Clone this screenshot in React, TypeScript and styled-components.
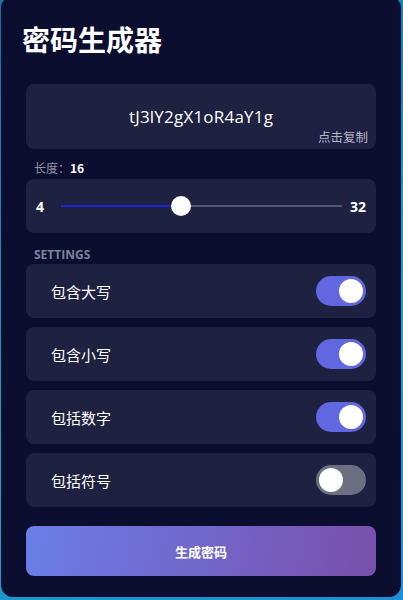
import React, { useState } from "react";
import styled, { createGlobalStyle } from "styled-components";

const GlobalStyle = createGlobalStyle`
  html, body {
    margin: 0;
    padding: 0;
  }
  body {
    width: 403px;
    height: 600px;
    overflow: hidden;
    background: linear-gradient(160deg, #1f6fa0 0%, #1aa0c8 60%, #1f8fd6 100%);
    font-family: "Noto Sans CJK SC", "Noto Sans", sans-serif;
  }
`;

const Card = styled.div`
  box-sizing: border-box;
  margin: -4px 2px 0 1px;
  height: 601px;
  padding: 24px 21px 0;
  background: #0b0e2f;
  border-radius: 12px;
  display: flex;
  flex-direction: column;
`;

const Title = styled.h1`
  margin: 0;
  font-size: 28px;
  line-height: 38px;
  font-weight: 700;
  color: #ffffff;
`;

const Content = styled.div`
  display: flex;
  flex-direction: column;
  padding: 26px 4px 0;
`;

const Panel = styled.div`
  background: #1f2141;
  border-radius: 8px;
`;

const PasswordBox = styled(Panel)`
  position: relative;
  height: 65px;
  display: flex;
  align-items: center;
  justify-content: center;
  cursor: pointer;
`;

const PasswordText = styled.span`
  font-family: "Open Sans", "Noto Sans", sans-serif;
  font-size: 17px;
  color: #ffffff;
  letter-spacing: 0.2px;
`;

const CopyHint = styled.span`
  position: absolute;
  right: 8px;
  bottom: 3px;
  font-size: 12.5px;
  color: #b5b7c8;
`;

const FieldLabel = styled.div`
  margin: 11px 0 3px 8px;
  font-size: 12px;
  line-height: 16px;
  color: #8e90a6;

  strong {
    color: #ffffff;
    font-weight: 700;
  }
`;

const SliderRow = styled(Panel)`
  height: 54px;
  display: flex;
  align-items: center;
  padding: 0 10px;
`;

const Bound = styled.span`
  font-family: "Open Sans", "Noto Sans", sans-serif;
  font-size: 14px;
  font-weight: 700;
  color: #ffffff;
`;

const Track = styled.div`
  position: relative;
  flex: 1;
  height: 2px;
  margin: 0 8px 0 17px;
  background: #55577a;
  border-radius: 1px;
`;

const Fill = styled.div`
  height: 100%;
  background: #1b26d6;
  border-radius: 1px;
`;

const Thumb = styled.div`
  position: absolute;
  top: 50%;
  width: 20px;
  height: 20px;
  margin: -10px 0 0 -10px;
  border-radius: 50%;
  background: #ffffff;
`;

const SectionLabel = styled.div`
  margin: 15px 0 2px 8px;
  font-family: "Open Sans", "Noto Sans", sans-serif;
  font-size: 12px;
  line-height: 14px;
  font-weight: 700;
  color: #7f8198;
`;

const Options = styled.div`
  display: flex;
  flex-direction: column;
  gap: 9px;
`;

const OptionRow = styled(Panel)`
  height: 54px;
  display: flex;
  align-items: center;
  justify-content: space-between;
  padding: 0 10px 0 25px;
`;

const OptionLabel = styled.span`
  font-size: 15px;
  color: #ffffff;
`;

const Switch = styled.button<{ $on: boolean }>`
  display: flex;
  align-items: center;
  justify-content: ${(p) => (p.$on ? "flex-end" : "flex-start")};
  box-sizing: border-box;
  width: 50px;
  height: 30px;
  padding: 0 3px;
  border: none;
  border-radius: 15px;
  background: ${(p) => (p.$on ? "#6167e0" : "#6c6f82")};
  cursor: pointer;
`;

const Knob = styled.span`
  width: 24px;
  height: 24px;
  border-radius: 50%;
  background: #ffffff;
`;

const GenerateButton = styled.button`
  margin-top: 19px;
  height: 50px;
  border: none;
  border-radius: 8px;
  background: linear-gradient(100deg, #6a7ee8 0%, #7a4fac 100%);
  color: #ffffff;
  font-family: "Noto Sans CJK SC", sans-serif;
  font-size: 13px;
  font-weight: 700;
  cursor: pointer;
`;

const options = [
  { key: "upper", label: "包含大写" },
  { key: "lower", label: "包含小写" },
  { key: "digits", label: "包括数字" },
  { key: "symbols", label: "包括符号" },
];

const MIN = 4;
const MAX = 32;

const App: React.FC = () => {
  const [length] = useState(16);
  const [flags, setFlags] = useState<Record<string, boolean>>({
    upper: true,
    lower: true,
    digits: true,
    symbols: false,
  });

  const pct = ((length - MIN) / (MAX - MIN)) * 100;

  return (
    <>
      <GlobalStyle />
      <Card>
        <Title>密码生成器</Title>
        <Content>
          <PasswordBox>
            <PasswordText>tJ3lY2gX1oR4aY1g</PasswordText>
            <CopyHint>点击复制</CopyHint>
          </PasswordBox>

          <FieldLabel>
            长度：<strong>{length}</strong>
          </FieldLabel>
          <SliderRow>
            <Bound>{MIN}</Bound>
            <Track>
              <Fill style={{ width: `${pct}%` }} />
              <Thumb style={{ left: `${pct}%` }} />
            </Track>
            <Bound>{MAX}</Bound>
          </SliderRow>

          <SectionLabel>SETTINGS</SectionLabel>
          <Options>
            {options.map((o) => (
              <OptionRow key={o.key}>
                <OptionLabel>{o.label}</OptionLabel>
                <Switch
                  $on={flags[o.key]}
                  onClick={() => setFlags({ ...flags, [o.key]: !flags[o.key] })}
                >
                  <Knob />
                </Switch>
              </OptionRow>
            ))}
          </Options>

          <GenerateButton>生成密码</GenerateButton>
        </Content>
      </Card>
    </>
  );
};

export default App;
